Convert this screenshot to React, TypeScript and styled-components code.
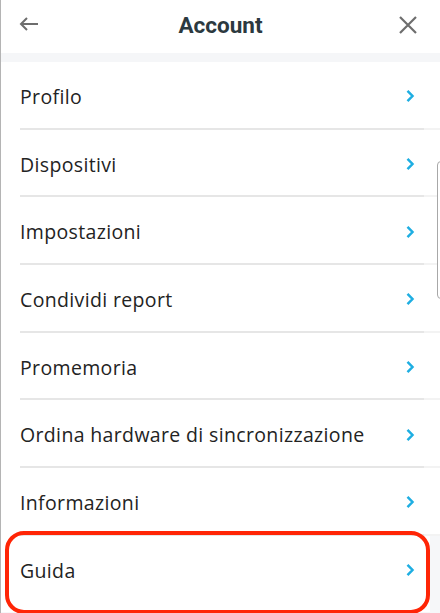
import React from "react";
import styled, { createGlobalStyle } from "styled-components";

const Global = createGlobalStyle`
  html, body { margin: 0; padding: 0; background: #ffffff; }
  body { font-family: "Open Sans", "Noto Sans", sans-serif; }
`;

const Page = styled.div`
  position: relative;
  width: 440px;
  height: 613px;
  overflow: hidden;
  background: #f6f7f9;
  border-left: 1px solid #b4b4b4;
  box-sizing: border-box;
`;

const Header = styled.header`
  height: 53px;
  box-sizing: border-box;
  padding-bottom: 3px;
  background: #ffffff;
  display: grid;
  grid-template-columns: 56px 1fr 56px;
  align-items: center;
`;

const IconButton = styled.button<{ $side: "left" | "right" }>`
  border: none;
  background: none;
  padding: 0;
  height: 40px;
  display: flex;
  align-items: center;
  justify-content: ${(p) => (p.$side === "left" ? "flex-start" : "flex-end")};
  padding-left: ${(p) => (p.$side === "left" ? "18px" : "0")};
  padding-right: ${(p) => (p.$side === "right" ? "22px" : "0")};
  padding-bottom: ${(p) => (p.$side === "left" ? "3px" : "1px")};
  cursor: pointer;
`;

const Title = styled.h1`
  margin: 0;
  text-align: center;
  font-family: Roboto, "Liberation Sans", sans-serif;
  font-weight: 700;
  font-size: 22.5px;
  line-height: 26px;
  color: #2c393f;
`;

const Band = styled.div`
  height: 9px;
  background: #f5f6f8;
`;

const List = styled.ul`
  list-style: none;
  margin: 0;
  padding: 0;
  background: #ffffff;
`;

const Row = styled.li<{ $last?: boolean }>`
  position: relative;
  height: ${(p) => (p.$last ? "76px" : "65.7px")};
  display: flex;
  align-items: center;
  padding: ${(p) => (p.$last ? "3px 25px 10px 19px" : "3px 25px 0 19px")};
  box-sizing: border-box;
  background: ${(p) =>
    p.$last ? "linear-gradient(to right, #ffffff 429px, #f6f7f9 429px)" : "#ffffff"};
`;

const Label = styled.span`
  flex: 1;
  font-size: 19.5px;
  color: #232323;
  letter-spacing: 0.35px;
`;

const Separator = styled.li`
  height: 2px;
  background: linear-gradient(
    to right,
    #ffffff 0 19px,
    #e6e6e6 19px 423px,
    #f3f3f3 423px 100%
  );
`;

const Highlight = styled.div`
  position: absolute;
  left: 4px;
  right: 10px;
  top: -5px;
  bottom: -2px;
  border: 4px solid #ff2506;
  border-radius: 19px;
  pointer-events: none;
`;

const ScrollHint = styled.div`
  position: absolute;
  left: 436px;
  top: 161px;
  width: 10px;
  height: 136px;
  border: 1px solid #a8a8a8;
  border-radius: 4px;
  background: #ffffff;
`;

const Chevron = () => (
  <svg width="10" height="14" viewBox="0 0 10 14">
    <path d="M2.5 1.8 L7.5 7 L2.5 12.2" fill="none" stroke="#1eaee2" strokeWidth="2.5" />
  </svg>
);

const BackIcon = () => (
  <svg width="20" height="16" viewBox="0 0 20 16">
    <path d="M2 8 H19 M8 2 L2 8 L8 14" fill="none" stroke="#6d6d6d" strokeWidth="2" />
  </svg>
);

const CloseIcon = () => (
  <svg width="20" height="20" viewBox="0 0 20 20">
    <path d="M2 2 L18 18 M18 2 L2 18" fill="none" stroke="#6d6d6d" strokeWidth="2.2" />
  </svg>
);

const items = [
  "Profilo",
  "Dispositivi",
  "Impostazioni",
  "Condividi report",
  "Promemoria",
  "Ordina hardware di sincronizzazione",
  "Informazioni",
  "Guida",
];

export default function App() {
  return (
    <>
      <Global />
      <Page>
        <Header>
          <IconButton $side="left" aria-label="Indietro">
            <BackIcon />
          </IconButton>
          <Title>Account</Title>
          <IconButton $side="right" aria-label="Chiudi">
            <CloseIcon />
          </IconButton>
        </Header>
        <Band />
        <List>
          {items.map((label, i) => {
            const last = i === items.length - 1;
            return (
              <React.Fragment key={label}>
                <Row $last={last}>
                  <Label>{label}</Label>
                  <Chevron />
                  {last && <Highlight />}
                </Row>
                {!last && <Separator />}
              </React.Fragment>
            );
          })}
        </List>
        <ScrollHint />
      </Page>
    </>
  );
}
